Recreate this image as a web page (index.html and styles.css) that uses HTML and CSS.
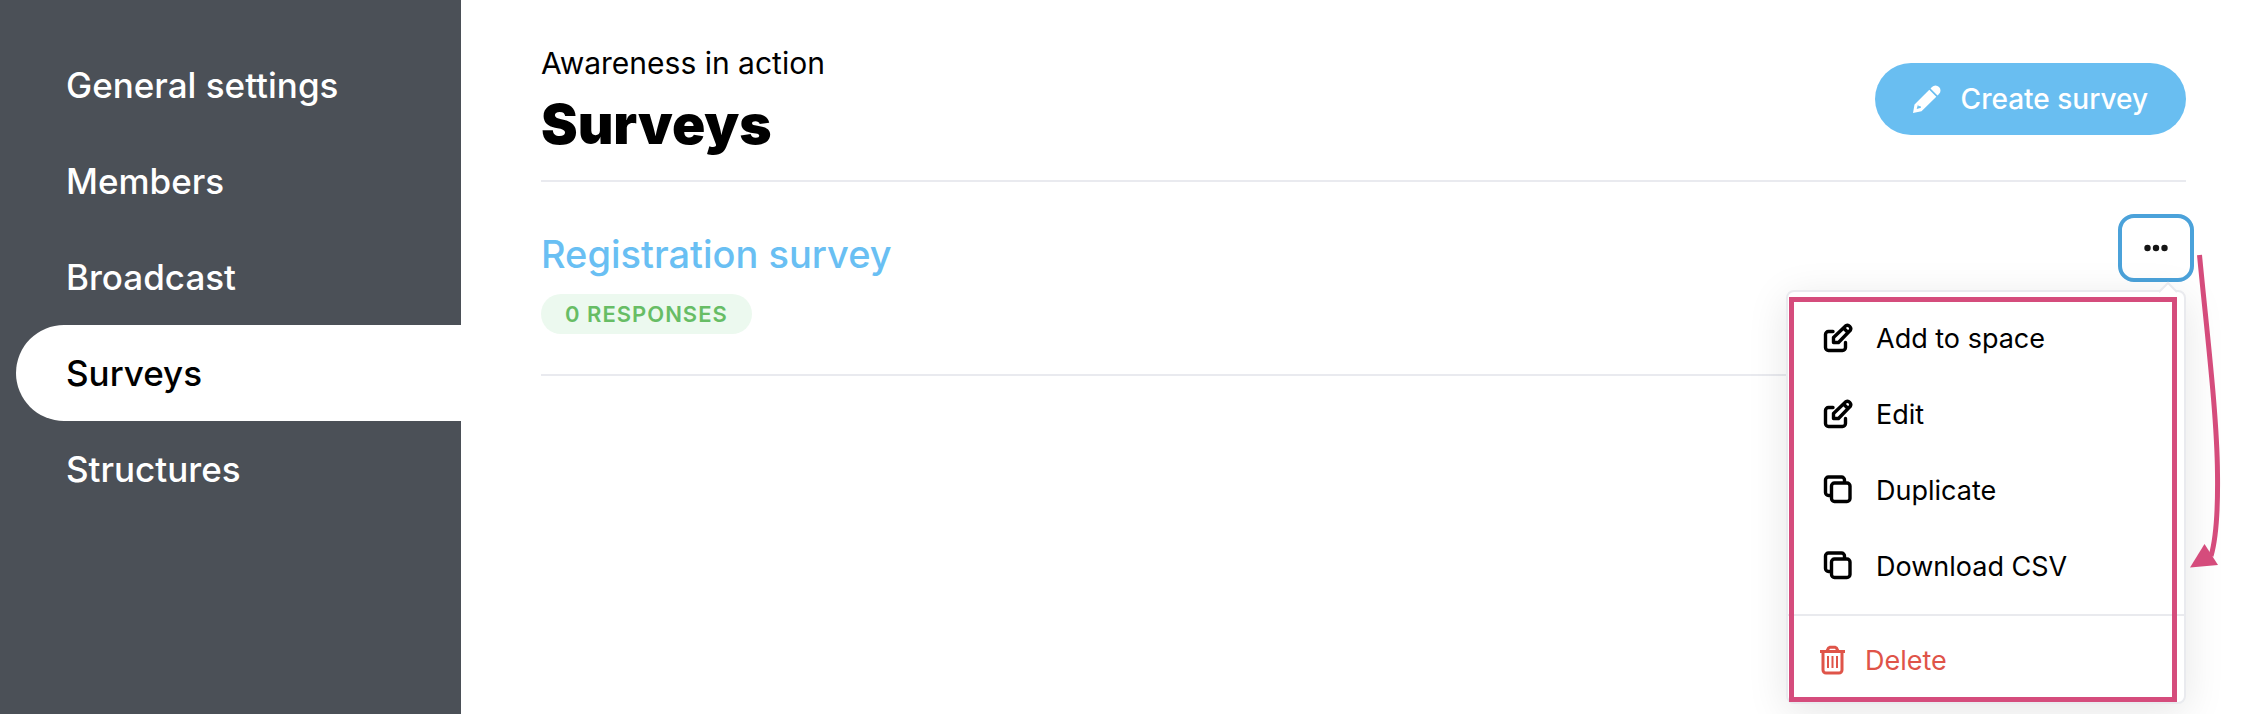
FILE: index.html
```html
<!DOCTYPE html>
<html lang="en">
<head>
<meta charset="utf-8">
<title>Surveys</title>
<link rel="stylesheet" href="styles.css">
</head>
<body>
<svg class="sprite" aria-hidden="true">
  <symbol id="edit" viewBox="0 0 30 30">
    <path d="M10 8.500H5.500a3 3 0 0 0-3 3V24.500a3 3 0 0 0 3 3h14a3 3 0 0 0 3-3V19.500M10.500 19.500v-5L22.800 2.800a3.300 3.300 0 0 1 4.500 4.500L15.500 19.500zM20.500 5l4.500 4.500" fill="none" stroke="currentColor" stroke-width="3.400" stroke-linecap="round" stroke-linejoin="round"/>
  </symbol>
  <symbol id="copy" viewBox="0 0 30 30">
    <path d="M8 20.500H5.500a3 3 0 0 1-3-3V5a3 3 0 0 1 3-3h13a3 3 0 0 1 3 3v2.500" fill="none" stroke="currentColor" stroke-width="3.400"/>
    <rect x="8.500" y="8" width="18.500" height="18.500" rx="3" fill="none" stroke="currentColor" stroke-width="3.400"/>
  </symbol>
</svg>
<div class="app">
  <nav class="sidebar" aria-label="Settings">
    <a class="nav-link" href="#general">General settings</a>
    <a class="nav-link" href="#members">Members</a>
    <a class="nav-link" href="#broadcast">Broadcast</a>
    <a class="nav-link nav-link-active" href="#surveys" aria-current="page">Surveys</a>
    <a class="nav-link" href="#structures">Structures</a>
  </nav>
  <main class="content">
    <header class="page-header">
      <div>
        <p class="space-name">Awareness in action</p>
        <h1 class="page-title">Surveys</h1>
      </div>
      <button class="create" type="button">
        <svg class="create-icon" viewBox="0 0 28 28" aria-hidden="true"><path fill="currentColor" fill-rule="evenodd" d="M19 2a4.800 4.800 0 0 1 7 0 4.800 4.800 0 0 1 0 7l-1.500 1.500-7-7zM16.300 4.700l7 7L8.500 26.300 0 28l1.500-8.500zM5 19.500L3.700 24l4.300-1.200-.6-1.700-1.800.2z"/></svg>
        Create survey
      </button>
    </header>
    <section class="survey">
      <div class="survey-info">
        <a class="survey-title" href="#registration">Registration survey</a>
        <span class="badge">0 RESPONSES</span>
      </div>
      <div class="actions">
        <button class="more" type="button" aria-label="More actions" aria-expanded="true">
          <svg class="more-icon" viewBox="0 0 24 8" aria-hidden="true"><g fill="#151515"><circle cx="3.500" cy="4" r="3.200"/><circle cx="12" cy="4" r="3.200"/><circle cx="20.500" cy="4" r="3.200"/></g></svg>
        </button>
        <div class="menu" role="menu">
          <svg class="caret" viewBox="0 0 20 12" aria-hidden="true"><path d="M1 11L10 2l9 9" fill="#fff" stroke="#e9eaee" stroke-width="2"/></svg>
          <button class="menu-item" type="button" role="menuitem"><svg class="menu-icon" aria-hidden="true"><use href="#edit"/></svg>Add to space</button>
          <button class="menu-item" type="button" role="menuitem"><svg class="menu-icon" aria-hidden="true"><use href="#edit"/></svg>Edit</button>
          <button class="menu-item" type="button" role="menuitem"><svg class="menu-icon" aria-hidden="true"><use href="#copy"/></svg>Duplicate</button>
          <button class="menu-item" type="button" role="menuitem"><svg class="menu-icon" aria-hidden="true"><use href="#copy"/></svg>Download CSV</button>
          <hr class="separator">
          <button class="menu-item menu-item-danger" type="button" role="menuitem"><svg class="trash-icon" viewBox="0 0 25 30" aria-hidden="true"><g fill="none" stroke="currentColor"><path d="M3 7v18a3 3 0 0 0 3 3h13a3 3 0 0 0 3-3V7M0 6.500h25M7 6l1.500-3 1.500-.8h5l1.500.8L18 6" stroke-width="3"/><path d="M8 11v12M12.500 11v12M17 11v12" stroke-width="2"/></g></svg>Delete</button>
          <div class="highlight"></div>
        </div>
        <svg class="arrow" viewBox="0 0 40 320" aria-hidden="true"><path d="M11.500 1C19 80 29 160 29.500 220C30 260 28 285 23 302" fill="none" stroke="#d54c7c" stroke-width="5"/><path d="M2 313.500L16.500 290 30 311z" fill="#d54c7c"/></svg>
      </div>
    </section>
  </main>
</div>
</body>
</html>
```
FILE: styles.css
```css
* { box-sizing: border-box; }
body {
  margin: 0;
  background: #fff;
  color: #000;
  font-family: Inter, "Liberation Sans", sans-serif;
  font-size: 28px;
}
button { font: inherit; border: 0; cursor: pointer; }
.sprite { position: absolute; width: 0; height: 0; }
.app { display: flex; min-height: 100vh; overflow: hidden; }
.sidebar {
  flex: 0 0 461px;
  padding: 37px 0 0 16px;
  background: #4b5057;
}
.nav-link {
  display: block;
  padding-left: 50px;
  border-radius: 48px 0 0 48px;
  color: #fff;
  font-size: 35px;
  font-weight: 500;
  line-height: 96px;
  text-decoration: none;
}
.nav-link-active { background: #fff; color: #000; }
.content { flex: 1; padding: 0 64px 0 80px; }
.page-header {
  display: flex;
  align-items: center;
  justify-content: space-between;
  padding: 42px 0 24px;
  border-bottom: 2px solid #e9eaef;
}
.space-name { margin: 0 0 8px; font-size: 30px; line-height: 42px; }
.page-title { margin: 0; font-size: 55px; font-weight: 900; line-height: 64px; }
.create {
  display: flex;
  align-items: center;
  gap: 20px;
  height: 72px;
  padding: 0 38px;
  border-radius: 36px;
  background: #69bef1;
  color: #fff;
  font-weight: 500;
}
.create-icon { width: 28px; height: 28px; }
.survey {
  display: flex;
  justify-content: space-between;
  padding: 32px 0 40px;
  border-bottom: 2px solid #e9eaef;
}
.survey-info {
  display: flex;
  flex-direction: column;
  align-items: flex-start;
  gap: 16px;
  padding-top: 16px;
}
.survey-title {
  color: #69bff3;
  font-size: 38px;
  font-weight: 500;
  line-height: 48px;
  text-decoration: none;
}
.badge {
  padding: 0 24px;
  border-radius: 20px;
  background: #ecf9ef;
  color: #67bd65;
  font-size: 22px;
  font-weight: 600;
  letter-spacing: 1px;
  line-height: 40px;
}
.actions { position: relative; margin-right: -8px; }
.more {
  display: flex;
  align-items: center;
  justify-content: center;
  width: 76px;
  height: 68px;
  padding: 0;
  border: 4px solid #4ba2da;
  border-radius: 16px;
  background: #fff;
}
.more-icon { width: 24px; height: 8px; }
.menu {
  position: absolute;
  top: 76px;
  right: 8px;
  width: 400px;
  padding: 8px 0 4px;
  border: 2px solid #e9eaee;
  border-radius: 8px;
  background: #fff;
  box-shadow: 0 8px 40px rgba(0, 0, 0, 0.1);
}
.caret { position: absolute; top: -11px; right: 6px; width: 20px; height: 12px; }
.menu-item {
  display: flex;
  align-items: center;
  gap: 23px;
  width: 100%;
  height: 76px;
  padding: 0 35px;
  background: none;
  color: #000;
  font-size: 27px;
}
.menu-item-danger { gap: 20px; padding: 0 32px; color: #df5449; }
.menu-icon { width: 30px; height: 30px; }
.trash-icon { width: 25px; height: 30px; }
.separator { margin: 10px 0 6px; border: 0; border-top: 2px solid #e9eaee; }
.highlight {
  position: absolute;
  inset: 5px 7px 0 1px;
  border: 5px solid #d54c7c;
  pointer-events: none;
}
.arrow {
  position: absolute;
  top: 40px;
  left: 70px;
  width: 40px;
  height: 320px;
  pointer-events: none;
}
```
